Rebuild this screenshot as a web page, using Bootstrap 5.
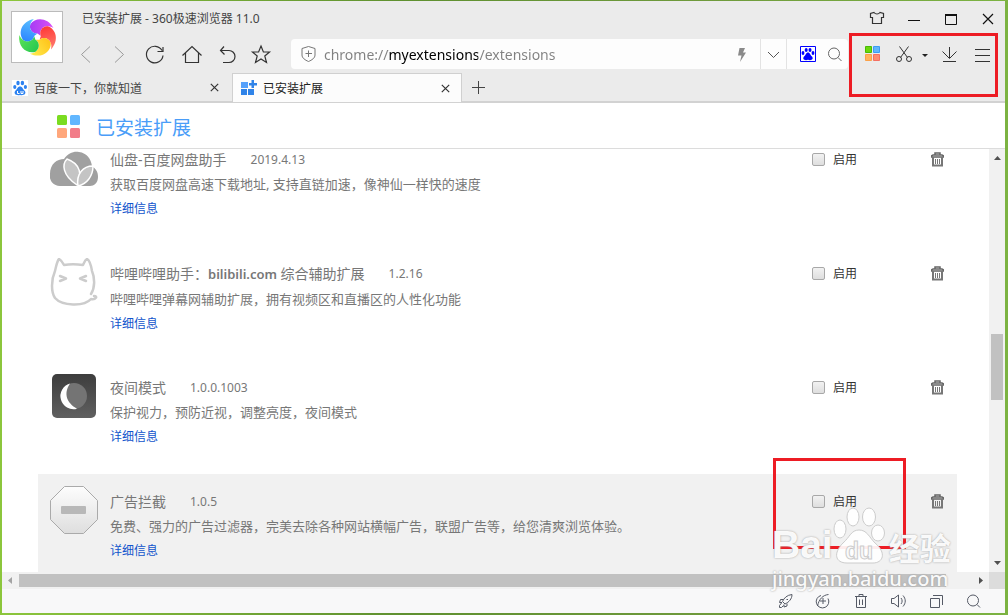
<!DOCTYPE html>
<html lang="zh-CN">
<head>
<meta charset="utf-8">
<meta name="viewport" content="width=device-width, initial-scale=1">
<title>已安装扩展 - 360极速浏览器 11.0</title>
<link href="https://cdn.jsdelivr.net/npm/bootstrap@5.3.0/dist/css/bootstrap.min.css" rel="stylesheet">
<style>
  body { font-family: "Noto Sans", "Noto Sans CJK SC", sans-serif; font-size: 12px; line-height: 24px; color: #444; background: linear-gradient(90deg, #8cc63c, #5f9030 40%, #6f9a3c 70%, #7cb342); padding: 1px 3px 2px 2px; }
  svg { display: block; fill: none; stroke: #333; flex-shrink: 0; }
  button { padding: 0; border: 0; background: none; }
  .no-line { stroke: none; }
  .app-window { background: #fff; }
  .chrome-top { background: #ebebeb; border-bottom: 2px solid #d2d2d2; height: 102px; }
  .logo-box { width: 52px; height: 52px; margin: 10px 5px 0 9px; background: #fff; border: 1px solid #bbb; }
  .title-row { height: 35px; padding-left: 14px; }
  .tool-row { height: 30px; margin-top: 3px; }
  .addr { width: 0; margin-left: 13px; height: 30px; background: #fdfdfd; border-radius: 4px; padding-left: 10px; }
  .url-box { border: 0; outline: 0; width: 0; margin-left: 7px; padding: 0; height: 30px; font-size: 14px; color: transparent;
    background: linear-gradient(90deg, #808080 64px, #000 64px 154px, #808080 154px); -webkit-background-clip: text; background-clip: text; }
  .addr-part { height: 30px; border-left: 1px solid #e3e3e3; }
  .right-tools { width: 157px; padding-left: 12px; }
  .tab-row { height: 29px; }
  .tab-item { width: 230px; height: 29px; padding: 0 13px 0 10px; }
  .tab-item span { padding: 2px 0 0 6px; }
  .tab-item.on { background: #fcfcfc; border: 1px solid #d0d0d0; border-bottom: 0; padding: 0 11px 0 8px; color: #222; }
  .page-head { height: 46px; border-bottom: 1px solid #dcdcdc; padding: 2px 0 0 55px; color: #4a9df8; }
  .page-head h1 { font-size: 19px; line-height: 24px; font-weight: 400; margin: 0 0 0 16px; padding-top: 2px; }
  .view { min-height: 0; }
  .ext-list { margin: -17px 32px 0 36px; }
  .ext-item { height: 114px; padding: 0 13px 0 12px; color: #777; position: relative; flex-shrink: 0; }
  .ext-item.hot { background: #f1f1f1; }
  .ext-icon { margin: 12px 12px 0 0; }
  .ext-text { padding-top: 15px; }
  .ext-text h2 { font-size: 14px; line-height: 25px; font-weight: 400; margin: 0; }
  .ext-text h2 b { font-weight: 600; font-size: 13px; }
  .ext-ver { margin-left: 24px; font-size: 12px; }
  .ext-text p { font-size: 13px; line-height: 25px; margin: 0; }
  .ext-text a { color: #1155cc; text-decoration: none; display: inline-block; }
  .ext-side { height: 39px; padding-top: 15px; color: #333; }
  .ext-side label { margin: 0 74px 0 8px; padding-top: 2px; }
  .ext-check { appearance: none; width: 13px; height: 13px; margin: 0; border: 1px solid #a8a8a8; border-radius: 2px; background: linear-gradient(#f2f2f2, #dedede); }
  .ext-check:checked { background: #1155cc; }
  .vbar { width: 16px; background: #f1f1f1; }
  .hbar { height: 17px; background: #f1f1f1; }
  .hbar-corner { width: 16px; height: 17px; background: #dcdcdc; }
  .bar-arrow { width: 17px; height: 17px; }
  .thumb { background: #c1c1c1; }
  .hbar .thumb { height: 13px; }
  .status { height: 24px; background: #f8f8f9; padding-right: 12px; }
  .status svg { stroke: #555a66; }
  .frame-red { position: absolute; border: 3px solid #ed1c24; pointer-events: none; }
  .frame-tools { right: 7px; top: 32px; width: 149px; height: 64px; }
  .frame-enable { right: 51px; top: -16px; width: 133px; height: 91px; }
  .wm { position: absolute; right: 53px; bottom: 24px; width: 180px; color: #fffffff0; pointer-events: none; text-shadow: 0 0 2px #999; z-index: 3; }
  .wm svg { text-shadow: none; }
  .wm-bai { font: 700 39px/39px "Liberation Sans", sans-serif; }
  .wm-cn { font: 700 31px/34px "Noto Sans CJK SC", sans-serif; }
  .wm-url { font: 500 20px/20px "Noto Sans", sans-serif; margin-top: 5px; }
</style>
</head>
<body class="vh-100 overflow-hidden">
<svg width="0" height="0" class="position-absolute" aria-hidden="true">
  <defs>
    <linearGradient id="plate" x1="0" y1="0" x2="0" y2="1"><stop offset="0" stop-color="#3d3d3d"/><stop offset="1" stop-color="#606060"/></linearGradient>
    <linearGradient id="octo" x1="0" y1="0" x2="0" y2="1"><stop offset="0" stop-color="#fdfdfd"/><stop offset="1" stop-color="#dedede"/></linearGradient>
    <linearGradient id="gp" x1="0" y1="0" x2="1" y2="0"><stop offset="0" stop-color="#a53cf5"/><stop offset="1" stop-color="#dc50f5"/></linearGradient>
    <linearGradient id="gr" x1="0" y1="0" x2="1" y2="0"><stop offset="0" stop-color="#ff3a36"/><stop offset="1" stop-color="#ff7c70"/></linearGradient>
    <linearGradient id="gy" x1="0" y1="0" x2="1" y2="0"><stop offset="0" stop-color="#ffc41a"/><stop offset="1" stop-color="#ffec50"/></linearGradient>
    <linearGradient id="gg" x1="0" y1="0" x2="1" y2="0"><stop offset="0" stop-color="#28c850"/><stop offset="1" stop-color="#5ee258"/></linearGradient>
    <linearGradient id="gu" x1="0" y1="0" x2="1" y2="0"><stop offset="0" stop-color="#2d86ff"/><stop offset="1" stop-color="#5cc2ff"/></linearGradient>
    <path id="petal" d="M0-3.500C-5-3-9-8-7-13C-2-20 10-20 16-9C14-10 12-11 10.200-10.700C4.800-11 1.300-5.700 3.300-1.100Z"/>
    <symbol id="bin" viewBox="0 0 13 15"><path d="M.7 5V3.700L2 3H11L12.300 3.700V5ZM4 2.500V1H9V2.500" stroke="#666" stroke-width="1.500"/><path d="M2 5V13.500H11V5" stroke="#777" stroke-width="2"/><path d="M4.500 7V12M6.500 7V12M8.500 7V12" stroke="#777"/></symbol>
    <symbol id="cross" viewBox="0 0 9 9"><path d="M.8.8 8.200 8.200M8.200.8.8 8.200" stroke="#333" stroke-width="1.200"/></symbol>
  </defs>
</svg>
<div class="app-window d-flex flex-column h-100 position-relative">
  <header class="chrome-top flex-shrink-0">
    <div class="d-flex">
      <div class="logo-box flex-shrink-0">
        <svg class="no-line" width="50" height="50" viewBox="-25.500 -25 50 50">
          <use href="#petal" fill="url(#gp)"/>
          <use href="#petal" fill="url(#gr)" transform="rotate(72)"/>
          <use href="#petal" fill="url(#gy)" transform="rotate(144)"/>
          <use href="#petal" fill="url(#gg)" transform="rotate(216)"/>
          <use href="#petal" fill="url(#gu)" transform="rotate(288)"/>
        </svg>
      </div>
      <div class="flex-grow-1">
        <div class="title-row d-flex align-items-center">
          <span class="flex-grow-1">已安装扩展 - 360极速浏览器 11.0</span>
          <button aria-label="皮肤"><svg width="36" height="30"><path d="M13 8.500C14.500 10.500 17.500 10.500 19 8.500L22.500 9.500V13.500H20.500V19.500H11.500V13.500H9.500V9.500Z" stroke-width="1.200"/></svg></button>
          <button aria-label="最小化"><svg width="36" height="30"><path d="M11 16.500H23" stroke="#111"/></svg></button>
          <button aria-label="最大化"><svg width="36" height="30"><path d="M12.500 11V20.500H23.500V11" stroke="#111"/><path d="M12 11H24" stroke="#111" stroke-width="2"/></svg></button>
          <button aria-label="关闭"><svg width="36" height="30"><path d="M14 10 24 20M24 10 14 20" stroke="#111" stroke-width="1.200"/></svg></button>
        </div>
        <div class="tool-row d-flex align-items-center">
          <button aria-label="后退"><svg width="35" height="30"><path d="M22 7.500 13.500 15.500 22 23.500" stroke="#999"/></svg></button>
          <button aria-label="前进"><svg width="35" height="30"><path d="M12 7.500 20.500 15.500 12 23.500" stroke="#999"/></svg></button>
          <button aria-label="刷新"><svg width="35" height="30"><path d="M24 11.500A8.300 8.300 0 1 0 25 16.500M25 8V12.500H19.500" stroke-width="1.200"/></svg></button>
          <button aria-label="主页"><svg width="35" height="30"><path d="M9.500 16.500 19 7.500 28.500 16.500M12.500 14V23.500H25.500V14" stroke-width="1.200"/></svg></button>
          <button aria-label="恢复"><svg width="35" height="30"><path d="M16 7.500 12.500 11.500 16.500 15.500M12.500 11.500H21A6 6 0 0 1 21 23.500H15" stroke-width="1.200"/></svg></button>
          <button aria-label="收藏"><svg width="35" height="30"><path d="M18 7 20.400 13H26.500L21.800 17 23.500 23.500 18 20 12.500 23.500 14.200 17 9.500 13H15.600Z" stroke-width="1.200"/></svg></button>
          <div class="addr d-flex align-items-center flex-grow-1">
            <svg width="16" height="18"><path d="M7.500 1.500 14 3.500V10C14 13 11 15 7.500 16.500 4 15 1 13 1 10V3.500ZM7.500 5.500V12M4.500 8.500H11" stroke="#777"/></svg>
            <input class="url-box flex-grow-1" type="text" aria-label="地址栏" value="chrome://myextensions/extensions">
            <button aria-label="极速模式"><svg width="38" height="30"><path d="M17.500 9H23L21 13.500H24L18 23 19.500 16.500H16Z" fill="#8a8a8a" stroke="none"/></svg></button>
            <button class="addr-part" aria-label="历史地址"><svg width="25" height="30"><path d="M7 13 12.500 18.500 18 13" stroke="#555"/></svg></button>
            <button class="addr-part" aria-label="百度搜索"><svg width="36" height="30"><path d="M13.500 7.500H28.500V22.500H13.500Z" stroke="#00f"/><g fill="#00f" stroke="none"><ellipse cx="16" cy="14" rx="1.400" ry="2"/><ellipse cx="19.200" cy="11" rx="1.500" ry="2"/><ellipse cx="23" cy="11" rx="1.500" ry="2"/><ellipse cx="26" cy="14" rx="1.400" ry="2"/><path d="M21 13.500C23 13.500 23 16 25 17.500 27 20 24.500 22 21 20.800 17.500 22 15 20 17 17.500 19 16 19 13.500 21 13.500Z"/></g></svg></button>
            <button aria-label="搜索"><svg width="25" height="30"><circle cx="11" cy="14.500" r="5.500" stroke="#666"/><path d="M15 18.500 18.500 22" stroke="#666"/></svg></button>
          </div>
          <div class="right-tools d-flex">
            <button aria-label="扩展中心"><svg width="36" height="30"><g stroke-width="1"><path d="M5.500 7.500h6v6h-6z" fill="#6ad70c" stroke="#48bb04"/><path d="M13.500 7.500h6v6h-6z" fill="#60b6fb" stroke="#3c9cf4"/><path d="M5.500 15.500h6v6h-6z" fill="#ffb35e" stroke="#fba048"/><path d="M13.500 15.500h6v6h-6z" fill="#ff8b70" stroke="#f56f62"/></g></svg></button>
            <button aria-label="截图"><svg width="17" height="30"><path d="M3.500 7.500 11.500 18.500M12.500 7.500 4.500 18.500"/><circle cx="3" cy="20" r="2.500"/><circle cx="13" cy="20" r="2.500"/></svg></button>
            <button aria-label="截图选项"><svg width="24" height="30"><path d="M9 15H15L12 18Z" fill="#222" stroke="none"/></svg></button>
            <button aria-label="下载"><svg width="31" height="30"><path d="M12.500 8V19M5.500 12.500 12.500 19.500 19.500 12.500M6 22.500H19"/></svg></button>
            <button aria-label="菜单"><svg width="24" height="30"><path d="M7 10.500H22M7 16.500H22M7 22.500H22"/></svg></button>
          </div>
        </div>
      </div>
    </div>
    <nav class="tab-row d-flex align-items-center mt-1">
      <div class="tab-item d-flex align-items-center">
        <svg width="16" height="16" viewBox="0 0 16 16"><path fill="#fff" stroke="none" d="M0 0h16v16H0z"/><g fill="#2d82f0" stroke="none"><ellipse cx="2.800" cy="7" rx="1.600" ry="2"/><ellipse cx="6" cy="3" rx="1.700" ry="2.200"/><ellipse cx="10.400" cy="3" rx="1.700" ry="2.200"/><ellipse cx="13.400" cy="7" rx="1.600" ry="2"/><path d="M8 6.500C10.500 6.500 10.500 9 12.500 10.500 15 13.500 12 16 8 15 4 16 1 13.500 3.500 10.500 5.500 9 5.500 6.500 8 6.500Z"/></g><path d="M5.500 11v2.500h2M9 11v2.500h2V11" stroke="#fff"/></svg>
        <span class="flex-grow-1">百度一下，你就知道</span>
        <button aria-label="关闭标签"><svg width="9" height="9"><use href="#cross"/></svg></button>
      </div>
      <div class="tab-item on d-flex align-items-center">
        <svg width="16" height="16" viewBox="0 0 16 16"><g fill="#2f83e8" stroke="none"><path d="M0 2h7v6H0z" fill="#55a0fa"/><path d="M0 9h6v6H0zM7 9h6v6H7zM10.500 0H13v8h-2.500zM8 3h8v2.500H8z"/></g></svg>
        <span class="flex-grow-1">已安装扩展</span>
        <button aria-label="关闭标签"><svg width="9" height="9"><use href="#cross"/></svg></button>
      </div>
      <button class="ms-2" aria-label="新标签页"><svg width="18" height="20"><path d="M2 9.500H15M8.500 3V16" stroke="#444"/></svg></button>
    </nav>
  </header>

  <div class="page-head d-flex align-items-center flex-shrink-0">
    <svg class="no-line" width="23" height="23"><rect width="10" height="10" rx="1.500" fill="#7bdc20"/><rect x="13" width="10" height="10" rx="1.500" fill="#62b7ff"/><rect y="13" width="10" height="10" rx="1.500" fill="#ffa77c"/><rect x="13" y="13" width="10" height="10" rx="1.500" fill="#f27d89"/></svg>
    <h1>已安装扩展</h1>
  </div>

  <div class="view d-flex flex-grow-1">
    <main class="flex-grow-1 overflow-hidden">
      <div class="ext-list d-flex flex-column">
        <section class="ext-item d-flex">
          <svg class="ext-icon no-line" width="48" height="48"><path fill="#a0a0a0" d="M10 42A10 10 0 0 1 0 30C0 20 7 15 14 15 18 9 24 7 29 8 37 9 41 15 42 22 46 25 48 28 48 33 48 39 44 42 40 42Z"/><g fill="#c4c4c4" stroke="#fff" stroke-width="1.500"><path d="M17 15C12 20 12 31 27 41 32 31 31 20 17 15Z"/><path d="M43 22C33 22 26 30 28 42 37 40 43 32 43 22Z"/></g></svg>
          <div class="ext-text flex-grow-1"><h2 class="d-flex"><span>仙盘-百度网盘助手</span><span class="ext-ver">2019.4.13</span></h2><p>获取百度网盘高速下载地址, 支持直链加速，像神仙一样快的速度</p><a href="#">详细信息</a></div>
          <div class="ext-side d-flex align-items-center"><input class="ext-check" type="checkbox" id="e1"><label for="e1">启用</label><button aria-label="删除"><svg width="13" height="15"><use href="#bin"/></svg></button></div>
        </section>
        <section class="ext-item d-flex">
          <svg class="ext-icon" width="48" height="48"><g stroke="#ccc" stroke-width="2.500" stroke-linecap="round" stroke-linejoin="round"><path d="M41 36C45 30 45 20 42 13 41 7 39 2 37 1 35 2 34 5 33 7 27 6 19 6 14 7 13 5 11 2 9 1 7 3 6 9 5 13 1 22 1 34 5 40 12 48 34 49 41 41 46 42 48 38 44 38"/><path d="M10 18 16 20.500 10 23M36 18 30 20.500 36 23"/></g></svg>
          <div class="ext-text flex-grow-1"><h2 class="d-flex"><span>哔哩哔哩助手：<b>bilibili.com</b> 综合辅助扩展</span><span class="ext-ver">1.2.16</span></h2><p>哔哩哔哩弹幕网辅助扩展，拥有视频区和直播区的人性化功能</p><a href="#">详细信息</a></div>
          <div class="ext-side d-flex align-items-center"><input class="ext-check" type="checkbox" id="e2"><label for="e2">启用</label><button aria-label="删除"><svg width="13" height="15"><use href="#bin"/></svg></button></div>
        </section>
        <section class="ext-item d-flex">
          <svg class="ext-icon no-line" width="48" height="48"><rect x="2" y="2" width="44" height="44" rx="5" fill="url(#plate)"/><circle cx="24" cy="24" r="13" fill="#747474"/><path fill="#fff" d="M20 11.500A13 13 0 0 0 27 36.700C17 31 13 22 20 11.500Z"/></svg>
          <div class="ext-text flex-grow-1"><h2 class="d-flex"><span>夜间模式</span><span class="ext-ver">1.0.0.1003</span></h2><p>保护视力，预防近视，调整亮度，夜间模式</p><a href="#">详细信息</a></div>
          <div class="ext-side d-flex align-items-center"><input class="ext-check" type="checkbox" id="e3"><label for="e3">启用</label><button aria-label="删除"><svg width="13" height="15"><use href="#bin"/></svg></button></div>
        </section>
        <section class="ext-item hot d-flex">
          <svg class="ext-icon" width="48" height="48"><path d="M14.500.5H33.500L47.500 14.500V33.500L33.500 47.500H14.500L.5 33.500V14.500Z" fill="url(#octo)" stroke="#aaa"/><rect x="11" y="20" width="25" height="8" rx="1" fill="#b8b8b8" stroke="none"/></svg>
          <div class="ext-text flex-grow-1"><h2 class="d-flex"><span>广告拦截</span><span class="ext-ver">1.0.5</span></h2><p>免费、强力的广告过滤器，完美去除各种网站横幅广告，联盟广告等，给您清爽浏览体验。</p><a href="#">详细信息</a></div>
          <div class="ext-side d-flex align-items-center"><input class="ext-check" type="checkbox" id="e4"><label for="e4">启用</label><button aria-label="删除"><svg width="13" height="15"><use href="#bin"/></svg></button></div>
          <div class="frame-red frame-enable"></div>
        </section>
      </div>
    </main>
    <div class="vbar d-flex flex-column align-items-center flex-shrink-0">
      <svg class="bar-arrow" viewBox="0 0 17 17"><path d="M5 11H12L8.500 7Z" fill="#505050" stroke="none"/></svg>
      <div style="flex:168"></div><div class="thumb w-75" style="flex:66"></div><div style="flex:155"></div>
      <svg class="bar-arrow" viewBox="0 0 17 17"><path d="M5 6H12L8.500 10Z" fill="#505050" stroke="none"/></svg>
    </div>
  </div>
  <div class="hbar d-flex align-items-center flex-shrink-0">
    <svg class="bar-arrow" viewBox="0 0 17 17"><path d="M10 5V12L6 8.500Z" fill="#a3a3a3" stroke="none"/></svg>
    <div class="thumb" style="flex:927"></div><div style="flex:26"></div>
    <svg class="bar-arrow" viewBox="0 0 17 17"><path d="M7 5V12L11 8.500Z" fill="#505050" stroke="none"/></svg>
    <div class="hbar-corner"></div>
  </div>
  <footer class="status d-flex justify-content-end align-items-center flex-shrink-0">
    <button aria-label="加速"><svg width="38" height="20"><path d="M27 3.500C22 4 19 7 17.500 10.500L20 13C24 11 27 8 27 3.500ZM18 8.500H15.500L14.500 11.500H17M22 12.500V15L19 16V13.500M16.500 12 14.500 14.500V16.500H16.500L18.500 14.500M21.500 8.500H23"/></svg></button>
    <button aria-label="加载"><svg width="38" height="20"><path d="M18 4.500A6.300 6.300 0 1 0 25 7.500M25.500 3.500C20 4 16 8 14.500 15M20 7V13M17 10H23"/></svg></button>
    <button aria-label="清理"><svg width="38" height="20"><path d="M14 5.500H26M18 5V3.500H22V5M15.500 6V16.500H24.500V6M18.500 8.500V14M21.500 8.500V14"/></svg></button>
    <button aria-label="声音"><svg width="38" height="20"><path d="M12.500 7.500H15L19.500 4V16L15 12.500H12.500ZM22 7C23.500 9 23.500 11 22 13M24 4.500C27 8 27 12 24 15.500"/></svg></button>
    <button aria-label="窗口"><svg width="38" height="20"><path d="M13.500 7.500H22.500V16.500H13.500ZM16 4.500H25.500V14"/></svg></button>
    <button aria-label="缩放"><svg width="38" height="20"><circle cx="18" cy="9.500" r="5.500"/><path d="M22 13.500 25 16.500"/></svg></button>
  </footer>

  <div class="frame-red frame-tools"></div>
  <div class="wm">
    <div class="d-flex align-items-end">
      <span class="wm-bai">Bai</span>
      <svg width="52" height="57" viewBox="0 0 52 57"><g fill="#fff" fill-opacity=".92" stroke="#ccc" stroke-width="1"><ellipse cx="7" cy="22" rx="6" ry="9"/><ellipse cx="20" cy="10" rx="6" ry="9"/><ellipse cx="36" cy="10" rx="6.500" ry="9"/><ellipse cx="45" cy="26" rx="6.500" ry="8"/><path d="M26 23C34 23 36 30 42 36 54 46 50 56 40 56H14C2 56 0 46 10 36 17 30 18 23 26 23Z"/></g><text x="12" y="52" font-family="Liberation Sans" font-weight="700" font-size="23" fill="#fafafa" stroke="#ccc" stroke-width="1">du</text></svg>
      <span class="wm-cn ms-1">经验</span>
    </div>
    <div class="wm-url">jingyan.baidu.com</div>
  </div>
</div>
<script src="https://cdn.jsdelivr.net/npm/bootstrap@5.3.0/dist/js/bootstrap.bundle.min.js"></script>
</body>
</html>
